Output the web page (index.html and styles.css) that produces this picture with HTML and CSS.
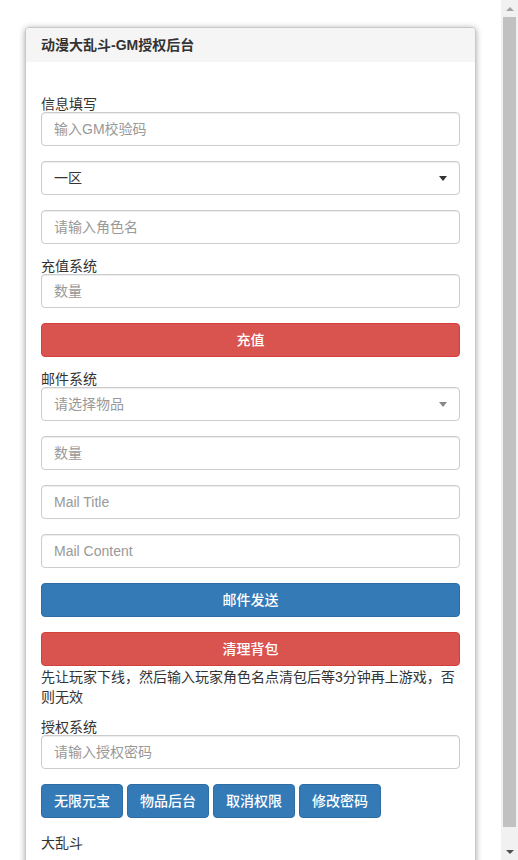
FILE: index.html
```html
<!DOCTYPE html>
<html lang="zh-CN">
<head>
<meta charset="utf-8">
<title>动漫大乱斗-GM授权后台</title>
<link rel="stylesheet" href="styles.css">
</head>
<body>
<div class="window">
  <div class="page">
    <div class="panel">
      <div class="panel-heading">动漫大乱斗-GM授权后台</div>
      <div class="panel-body">
        <div class="spacer"></div>
        <label class="group-label">信息填写</label>
        <input class="form-control" type="text" placeholder="输入GM校验码">
        <div class="select-wrap gap">
          <select class="form-control select-native"><option>一区</option></select>
          <span class="caret caret-dark"></span>
        </div>
        <input class="form-control gap" type="text" placeholder="请输入角色名">

        <label class="group-label gap">充值系统</label>
        <input class="form-control" type="text" placeholder="数量">
        <button class="btn btn-danger btn-block gap">充值</button>

        <label class="group-label gap">邮件系统</label>
        <div class="select-wrap">
          <div class="form-control select2"><span class="placeholder">请选择物品</span></div>
          <span class="caret caret-light"></span>
        </div>
        <input class="form-control gap" type="text" placeholder="数量">
        <input class="form-control gap" type="text" placeholder="Mail Title">
        <input class="form-control gap" type="text" placeholder="Mail Content">
        <button class="btn btn-primary btn-block gap">邮件发送</button>
        <button class="btn btn-danger btn-block gap">清理背包</button>
        <p class="note">先让玩家下线，然后输入玩家角色名点清包后等3分钟再上游戏，否则无效</p>

        <label class="group-label note-gap">授权系统</label>
        <input class="form-control" type="password" placeholder="请输入授权密码">
        <div class="btn-row gap">
          <button class="btn btn-primary">无限元宝</button>
          <button class="btn btn-primary">物品后台</button>
          <button class="btn btn-primary">取消权限</button>
          <button class="btn btn-primary">修改密码</button>
        </div>
        <p class="footer-text">大乱斗</p>
      </div>
    </div>
  </div>
  <div class="scrollbar">
    <div class="sb-btn"><span class="sb-up"></span></div>
    <div class="sb-track"><div class="sb-thumb"></div></div>
    <div class="sb-btn"><span class="sb-down"></span></div>
  </div>
</div>
</body>
</html>
```
FILE: styles.css
```css
html, body {
  margin: 0;
  padding: 0;
  height: 860px;
  overflow: hidden;
  background: #fff;
}
body {
  font-family: "Liberation Sans", "Noto Sans CJK SC", sans-serif;
  font-size: 14px;
  color: #333;
}
.window {
  display: flex;
  height: 860px;
}
.page {
  flex: 1;
  overflow: hidden;
  padding: 27px 25px 0 25px;
}
.panel {
  border: 1px solid #c8c8c8;
  border-radius: 4px;
  box-shadow: 0 1px 6px rgba(0, 0, 0, 0.35);
  background: #fff;
}
.panel-heading {
  background: #f5f5f5;
  padding: 10px 15px;
  line-height: 14px;
  font-size: 14px;
  font-weight: 700;
  color: #333;
  border-radius: 3px 3px 0 0;
}
.panel-body {
  padding: 15px 15px 20px;
}
.spacer {
  height: 20px;
}
.group-label {
  display: block;
  line-height: 15px;
  height: 15px;
  font-size: 14px;
  color: #333;
}
.gap {
  margin-top: 15px;
}
.note-gap {
  margin-top: 13px;
}
.form-control {
  display: block;
  box-sizing: border-box;
  width: 100%;
  height: 34px;
  padding: 6px 12px;
  font-family: inherit;
  font-size: 14px;
  line-height: 20px;
  color: #555;
  background: #fff;
  border: 1px solid #ccc;
  border-radius: 4px;
  box-shadow: inset 0 1px 1px rgba(0, 0, 0, 0.075);
  outline: none;
}
.form-control::placeholder {
  color: #999;
}
.select-wrap {
  position: relative;
}
.select-native {
  appearance: none;
  -webkit-appearance: none;
  color: #333;
}
.select2 {
  display: flex;
  align-items: center;
}
.placeholder {
  color: #999;
}
.caret {
  position: absolute;
  right: 13px;
  top: 15px;
  width: 0;
  height: 0;
  border-left: 4px solid transparent;
  border-right: 4px solid transparent;
  border-top: 5px solid #333;
}
.caret-light {
  border-top-color: #888;
}
.btn {
  display: block;
  box-sizing: border-box;
  height: 34px;
  padding: 6px 12px;
  font-family: inherit;
  font-size: 14px;
  font-weight: 500;
  line-height: 20px;
  color: #fff;
  border: 1px solid transparent;
  border-radius: 4px;
  text-align: center;
  white-space: nowrap;
}
.btn-block {
  width: 100%;
}
.btn-danger {
  background: #d9534f;
  border-color: #d43f3a;
}
.btn-primary {
  background: #337ab7;
  border-color: #2e6da4;
}
.note {
  margin: 0;
  line-height: 20px;
  padding-top: 1px;
}
.btn-row {
  display: flex;
  gap: 4px;
}
.btn-row .btn {
  width: 82px;
  padding: 6px 0;
}
.footer-text {
  margin: 15px 0 0;
  line-height: 20px;
}
.scrollbar {
  width: 17px;
  flex: none;
  display: flex;
  flex-direction: column;
  background: #f1f1f1;
  height: 860px;
}
.sb-btn {
  height: 17px;
  flex: none;
  display: flex;
  align-items: center;
  justify-content: center;
}
.sb-up {
  width: 0;
  height: 0;
  border-left: 4px solid transparent;
  border-right: 4px solid transparent;
  border-bottom: 4px solid #a3a3a3;
}
.sb-down {
  width: 0;
  height: 0;
  border-left: 4px solid transparent;
  border-right: 4px solid transparent;
  border-top: 4px solid #505050;
}
.sb-track {
  flex: 1;
  padding: 0 2px;
}
.sb-thumb {
  height: 810px;
  background: #c1c1c1;
}
```
